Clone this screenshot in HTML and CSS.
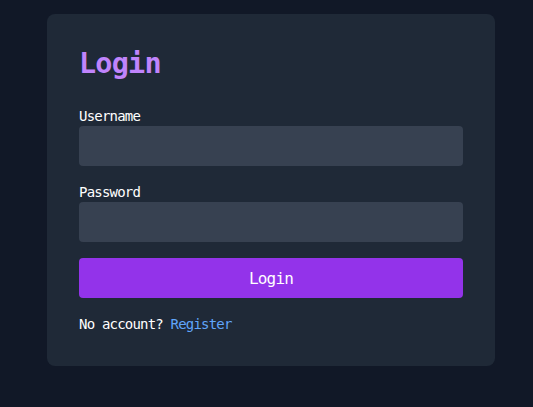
FILE: index.html
```html
<!DOCTYPE html>
<html lang="en">
<head>
  <meta charset="UTF-8" />
  <meta name="viewport" content="width=device-width, initial-scale=1" />
  <title>Login</title>
  <link rel="stylesheet" href="styles.css">
</head>
<body>
  <div class="page">
    <div class="card">
      <h1>Login</h1>
      <form class="login-form" onsubmit="return false">
        <label for="username">Username</label>
        <input type="text" id="username" name="username" />
        <label for="password">Password</label>
        <input type="password" id="password" name="password" />
        <button type="submit">Login</button>
      </form>
      <p class="register">No account? <a href="#">Register</a></p>
    </div>
  </div>
</body>
</html>
```

FILE: styles.css
```css
body {
  background: #111827;
  font-family: "DejaVu Sans Mono", "Liberation Mono", monospace;
  letter-spacing: -0.05em;
  margin: 0;
  padding: 0;
  color: #fff;
  height: 100vh;
}
.page {
  display: flex;
  justify-content: center;
  padding: 14px 0 0 9px;
}
.card {
  background: #1f2937;
  width: 100%;
  max-width: 448px;
  box-sizing: border-box;
  padding: 32px;
  border-radius: 8px;
}
h1 {
  margin: 0 0 24px;
  font-size: 28.5px;
  line-height: 36px;
  font-weight: 700;
  color: #c084fc;
}
.login-form {
  display: flex;
  flex-direction: column;
}
label {
  font-size: 14px;
  line-height: 20px;
}
input[type="text"],
input[type="password"] {
  height: 40px;
  margin-bottom: 16px;
  padding: 0 8px;
  border: none;
  border-radius: 4px;
  background: #374151;
  color: #fff;
  font-family: inherit;
  font-size: 14px;
  box-sizing: border-box;
}
button {
  height: 40px;
  border: none;
  border-radius: 4px;
  background: #9333ea;
  color: #fff;
  font-family: inherit;
  letter-spacing: inherit;
  font-size: 16px;
  cursor: pointer;
}
button:hover {
  background: #7e22ce;
}
.register {
  margin: 16px 0 0;
  font-size: 14px;
  line-height: 20px;
}
.register a {
  color: #60a5fa;
  text-decoration: none;
}
```
